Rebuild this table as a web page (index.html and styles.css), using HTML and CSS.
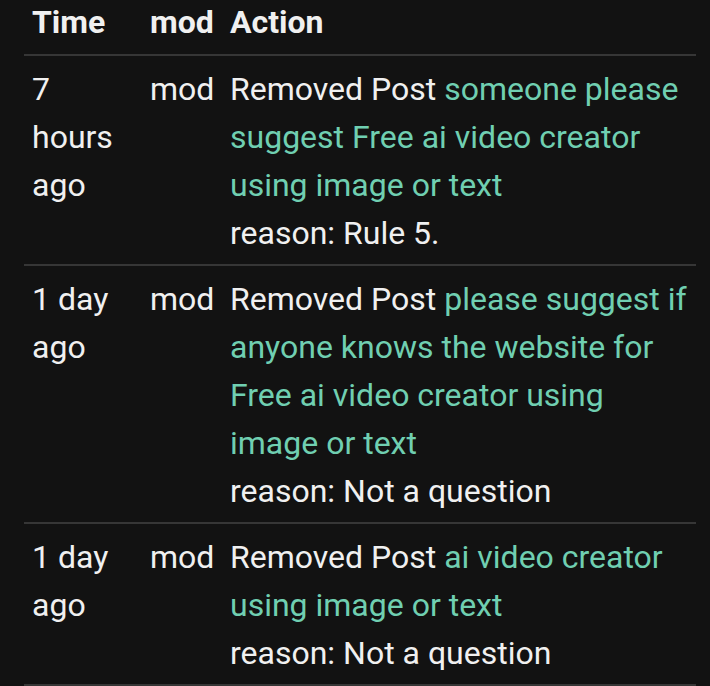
FILE: index.html
```html
<!DOCTYPE html>
<html lang="en">

<head>
    <meta charset="UTF-8">
    <meta name="viewport" content="width=device-width, initial-scale=1.0">
    <title>Modlog</title>
    <link rel="stylesheet" href="styles.css">
</head>

<body>
    <div class="container">
        <table class="modlog">
            <colgroup>
                <col class="col-time">
                <col class="col-mod">
                <col class="col-action">
            </colgroup>
            <thead>
                <tr>
                    <th>Time</th>
                    <th>mod</th>
                    <th>Action</th>
                </tr>
            </thead>
            <tbody>
                <tr>
                    <td>7 hours ago</td>
                    <td>mod</td>
                    <td>
                        Removed Post <a href="#" class="post-link">someone please suggest Free ai video creator using image or text</a>
                        <div class="reason">reason: Rule 5.</div>
                    </td>
                </tr>
                <tr>
                    <td>1 day ago</td>
                    <td>mod</td>
                    <td>
                        Removed Post <a href="#" class="post-link">please suggest if anyone knows the website for Free ai video creator using image or text</a>
                        <div class="reason">reason: Not a question</div>
                    </td>
                </tr>
                <tr>
                    <td>1 day ago</td>
                    <td>mod</td>
                    <td>
                        Removed Post <a href="#" class="post-link">ai video creator using image or text</a>
                        <div class="reason">reason: Not a question</div>
                    </td>
                </tr>
            </tbody>
        </table>
    </div>
</body>

</html>
```

FILE: styles.css
```css
body {
    font-family: 'Roboto', 'Liberation Sans', sans-serif;
    background-color: #121212;
    color: #f0f0f0;
    margin: 0;
}

.container {
    padding: 0 14px 0 24px;
}

.modlog {
    width: 672px;
    border-collapse: collapse;
    table-layout: fixed;
    font-size: 32px;
    line-height: 48px;
}

.col-time {
    width: 118px;
}

.col-mod {
    width: 80px;
}

.modlog th {
    text-align: left;
    font-weight: bold;
    line-height: 44px;
    padding: 0 8px 10px;
}

.modlog tr {
    border-bottom: 2px solid #363636;
}

.modlog td {
    vertical-align: top;
    padding: 9px 8px 7px;
}

.post-link {
    color: #70cfb1;
    text-decoration: none;
}
```
